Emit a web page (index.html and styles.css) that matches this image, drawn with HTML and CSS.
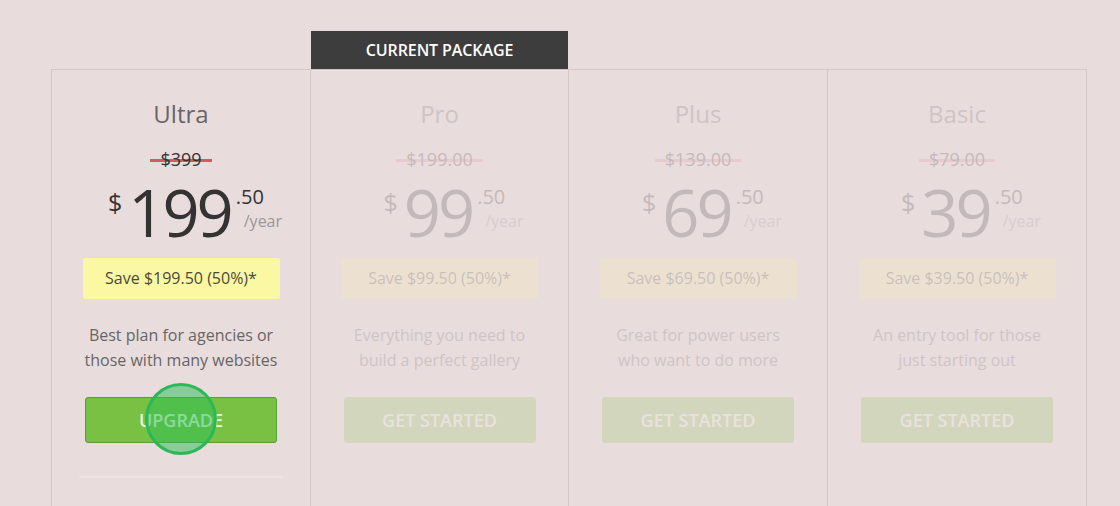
FILE: index.html
```html
<!DOCTYPE html>
<html>
<head>
<meta charset="utf-8">
<link rel="stylesheet" href="styles.css">
</head>
<body>
<div class="pricing">
  <div class="col">
    <div class="tag-slot"></div>
    <div class="card">
      <div class="title">Ultra</div>
      <div class="old"><span class="strike">$399</span></div>
      <div class="price">
        <span class="cur">$</span>
        <span class="num">199</span>
        <span class="side"><span class="cents">.50</span><span class="per">/year</span></span>
      </div>
      <div class="save">Save $199.50 (50%)*</div>
      <p class="desc">Best plan for agencies or<br>those with many websites</p>
      <div class="btn-wrap">
        <button class="btn">Upgrade</button>
        <span class="tap"></span>
      </div>
      <div class="rule"></div>
    </div>
  </div>
  <div class="col">
    <div class="tag-slot"><div class="tag">CURRENT PACKAGE</div></div>
    <div class="card">
      <div class="faded">
        <div class="title">Pro</div>
        <div class="old"><span class="strike">$199.00</span></div>
        <div class="price">
          <span class="cur">$</span>
          <span class="num">99</span>
          <span class="side"><span class="cents">.50</span><span class="per">/year</span></span>
        </div>
        <div class="save">Save $99.50 (50%)*</div>
        <p class="desc">Everything you need to<br>build a perfect gallery</p>
        <div class="btn-wrap"><button class="btn">Get Started</button></div>
      </div>
    </div>
  </div>
  <div class="col">
    <div class="tag-slot"></div>
    <div class="card">
      <div class="faded">
        <div class="title">Plus</div>
        <div class="old"><span class="strike">$139.00</span></div>
        <div class="price">
          <span class="cur">$</span>
          <span class="num">69</span>
          <span class="side"><span class="cents">.50</span><span class="per">/year</span></span>
        </div>
        <div class="save">Save $69.50 (50%)*</div>
        <p class="desc">Great for power users<br>who want to do more</p>
        <div class="btn-wrap"><button class="btn">Get Started</button></div>
      </div>
    </div>
  </div>
  <div class="col last">
    <div class="tag-slot"></div>
    <div class="card">
      <div class="faded">
        <div class="title">Basic</div>
        <div class="old"><span class="strike">$79.00</span></div>
        <div class="price">
          <span class="cur">$</span>
          <span class="num">39</span>
          <span class="side"><span class="cents">.50</span><span class="per">/year</span></span>
        </div>
        <div class="save">Save $39.50 (50%)*</div>
        <p class="desc">An entry tool for those<br>just starting out</p>
        <div class="btn-wrap"><button class="btn">Get Started</button></div>
      </div>
    </div>
  </div>
</div>
</body>
</html>
```

FILE: styles.css
```css
* { box-sizing: border-box; }
html, body {
  margin: 0;
  padding: 0;
  height: 100%;
  overflow: hidden;
}
body {
  background: #e9dcdd;
  font-family: "Open Sans", "Lato", sans-serif;
  color: #666;
}
.pricing {
  display: grid;
  grid-template-columns: 259px 258px 259px 260px;
  padding: 31px 0 0 51px;
  height: 100%;
}
.col {
  display: flex;
  flex-direction: column;
}
.tag-slot {
  height: 38px;
  padding-left: 1px;
}
.tag {
  height: 38px;
  background: #3d3d3d;
  color: #fff;
  font-size: 16px;
  font-weight: 600;
  display: flex;
  align-items: center;
  justify-content: center;
  letter-spacing: -0.1px;
}
.card {
  flex: 1;
  border-top: 1px solid #d5c8c9;
  border-left: 1px solid #d5c8c9;
  text-align: center;
  padding-top: 29px;
}
.col.last .card { border-right: 1px solid #d5c8c9; }
.faded { opacity: 0.2; }
.faded .strike { background-image: linear-gradient(#e38a8e, #e38a8e); }
.title {
  font-size: 24px;
  line-height: 30px;
  color: #666;
}
.old {
  margin-top: 22px;
  font-size: 18px;
  line-height: 16px;
  color: #333;
}
.strike {
  padding: 0 10px;
  background-image: linear-gradient(#d85a60, #d85a60);
  background-repeat: no-repeat;
  background-size: 100% 3px;
  background-position: 0 55%;
}
.price {
  display: flex;
  justify-content: center;
  align-items: flex-start;
  margin-top: 15px;
  color: #333;
  padding-left: 28px;
}
.cur {
  font-size: 25px;
  line-height: 30px;
  margin-top: 5px;
  margin-right: 6px;
}
.num {
  font-size: 65px;
  line-height: 60px;
  letter-spacing: -3px;
}
.side {
  display: flex;
  flex-direction: column;
  align-items: flex-start;
  margin-left: 5px;
  margin-top: 4px;
}
.cents {
  font-size: 20px;
  line-height: 22px;
}
.per {
  font-size: 16px;
  line-height: 22px;
  color: #999;
  margin-left: 8px;
  margin-top: 2px;
}
.save {
  width: 197px;
  height: 41px;
  margin: 16px auto 0;
  background: #fbf8a3;
  border-radius: 2px;
  font-size: 16px;
  line-height: 41px;
  color: #4c4a3c;
}
.desc {
  margin: 24px 0 0;
  font-size: 16px;
  line-height: 25px;
  color: #666;
}
.btn-wrap {
  position: relative;
  width: 192px;
  margin: 24px auto 0;
}
.btn {
  display: block;
  width: 192px;
  height: 46px;
  background: #79c143;
  border: 1px solid #5d9b35;
  border-radius: 3px;
  color: #eef7e4;
  font-family: inherit;
  font-size: 18px;
  font-weight: 600;
  text-transform: uppercase;
  padding: 0;
}
.faded .btn { border-color: #79c143; }
.tap {
  position: absolute;
  left: 60px;
  top: -14px;
  width: 72px;
  height: 72px;
  border-radius: 50%;
  background: rgba(40, 190, 85, 0.5);
  border: 3px solid #2ab956;
}
.rule {
  width: 204px;
  height: 2px;
  margin: 33px auto 0;
  background: #efe3e4;
}
```
